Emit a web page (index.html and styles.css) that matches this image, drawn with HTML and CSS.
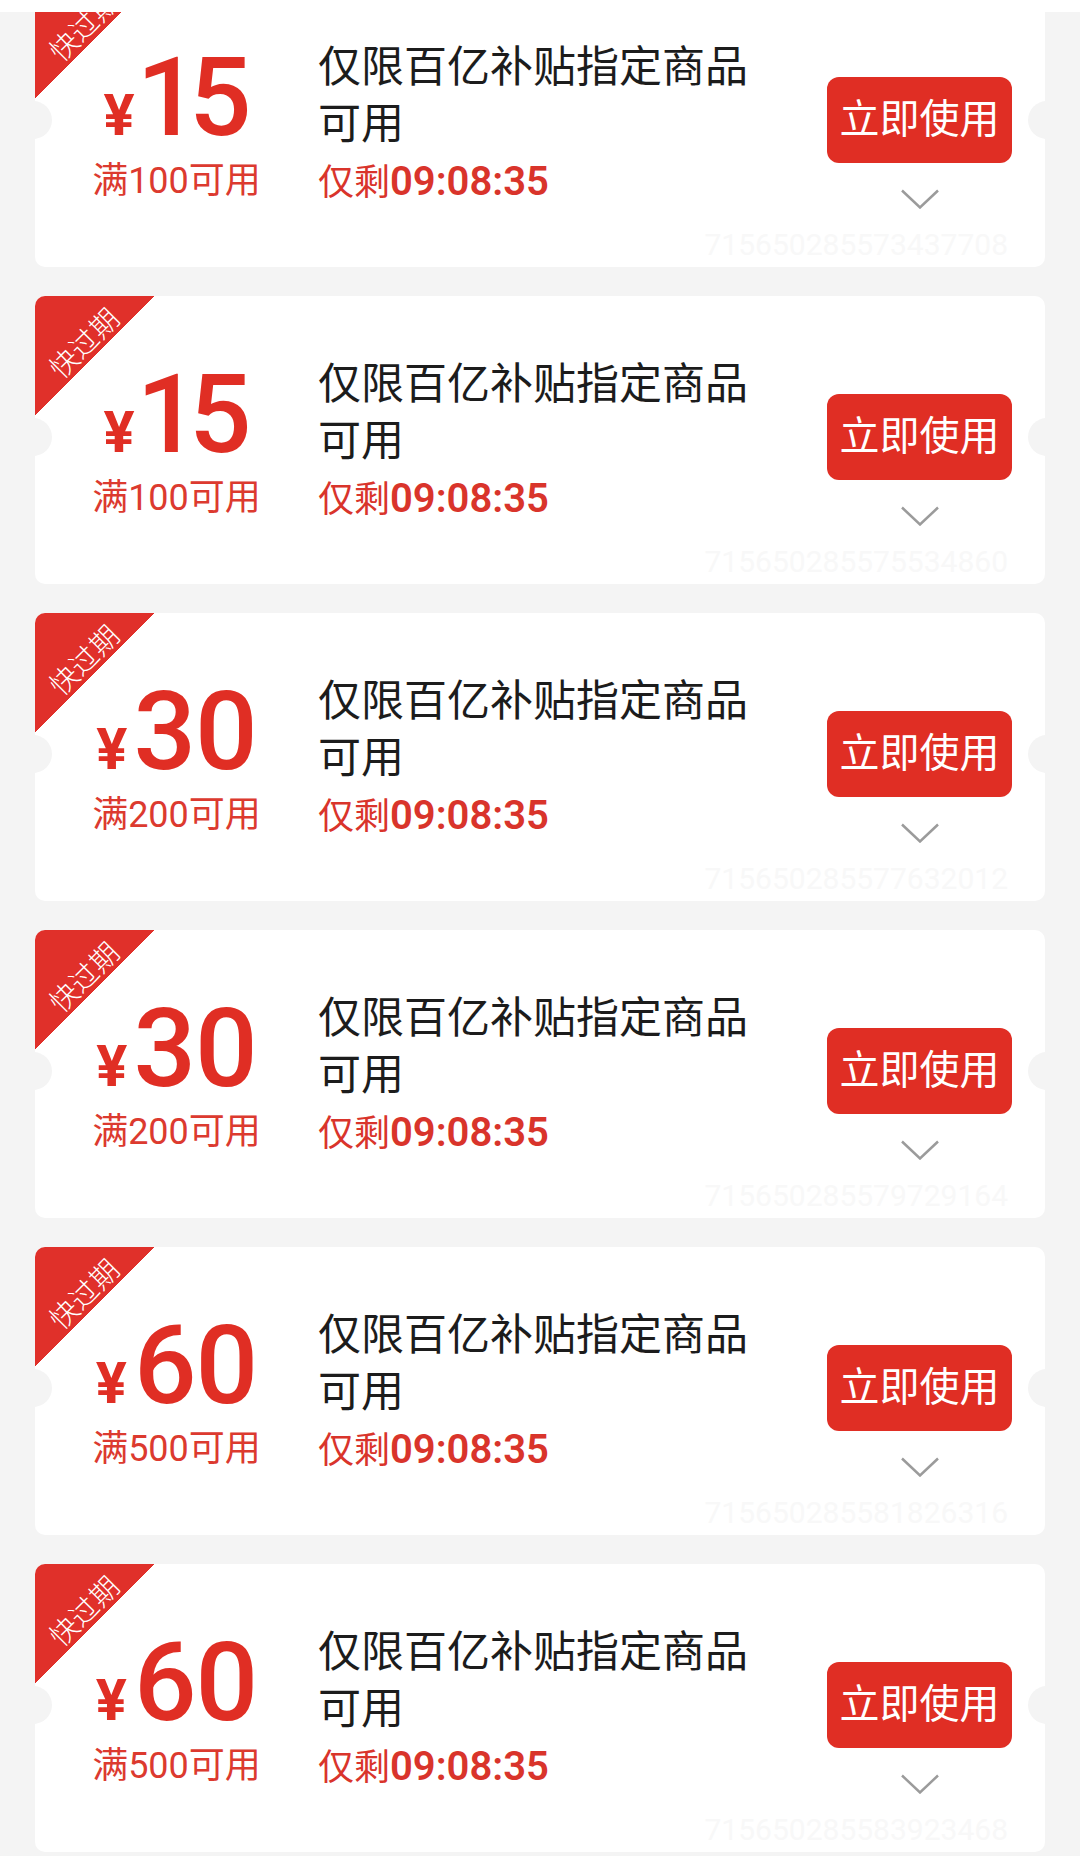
FILE: index.html
```html
<!DOCTYPE html>
<html lang="zh-CN">
<head>
<meta charset="utf-8">
<title>优惠券</title>
<link rel="stylesheet" href="styles.css">
</head>
<body>
<div class="topbar"></div>
<main class="list">
  <section class="coupon">
    <div class="tag"><span>快过期</span></div>
    <div class="row">
      <div class="amount">
        <div class="price"><span class="yen">¥</span>15</div>
        <div class="cond">满100可用</div>
      </div>
      <div class="info">
        <div class="title">仅限百亿补贴指定商品可用</div>
        <div class="timer">仅剩<b>09:08:35</b></div>
      </div>
      <div class="action">
        <button class="use">立即使用</button>
        <svg class="chev" width="38" height="20" viewBox="0 0 38 20"><polyline points="1,1.5 19,18.5 37,1.5"/></svg>
      </div>
    </div>
    <div class="code">715650285573437708</div>
    <i class="notch left"></i><i class="notch right"></i>
  </section>

  <section class="coupon">
    <div class="tag"><span>快过期</span></div>
    <div class="row">
      <div class="amount">
        <div class="price"><span class="yen">¥</span>15</div>
        <div class="cond">满100可用</div>
      </div>
      <div class="info">
        <div class="title">仅限百亿补贴指定商品可用</div>
        <div class="timer">仅剩<b>09:08:35</b></div>
      </div>
      <div class="action">
        <button class="use">立即使用</button>
        <svg class="chev" width="38" height="20" viewBox="0 0 38 20"><polyline points="1,1.5 19,18.5 37,1.5"/></svg>
      </div>
    </div>
    <div class="code">715650285575534860</div>
    <i class="notch left"></i><i class="notch right"></i>
  </section>

  <section class="coupon">
    <div class="tag"><span>快过期</span></div>
    <div class="row">
      <div class="amount">
        <div class="price"><span class="yen">¥</span>30</div>
        <div class="cond">满200可用</div>
      </div>
      <div class="info">
        <div class="title">仅限百亿补贴指定商品可用</div>
        <div class="timer">仅剩<b>09:08:35</b></div>
      </div>
      <div class="action">
        <button class="use">立即使用</button>
        <svg class="chev" width="38" height="20" viewBox="0 0 38 20"><polyline points="1,1.5 19,18.5 37,1.5"/></svg>
      </div>
    </div>
    <div class="code">715650285577632012</div>
    <i class="notch left"></i><i class="notch right"></i>
  </section>

  <section class="coupon">
    <div class="tag"><span>快过期</span></div>
    <div class="row">
      <div class="amount">
        <div class="price"><span class="yen">¥</span>30</div>
        <div class="cond">满200可用</div>
      </div>
      <div class="info">
        <div class="title">仅限百亿补贴指定商品可用</div>
        <div class="timer">仅剩<b>09:08:35</b></div>
      </div>
      <div class="action">
        <button class="use">立即使用</button>
        <svg class="chev" width="38" height="20" viewBox="0 0 38 20"><polyline points="1,1.5 19,18.5 37,1.5"/></svg>
      </div>
    </div>
    <div class="code">715650285579729164</div>
    <i class="notch left"></i><i class="notch right"></i>
  </section>

  <section class="coupon">
    <div class="tag"><span>快过期</span></div>
    <div class="row">
      <div class="amount">
        <div class="price"><span class="yen">¥</span>60</div>
        <div class="cond">满500可用</div>
      </div>
      <div class="info">
        <div class="title">仅限百亿补贴指定商品可用</div>
        <div class="timer">仅剩<b>09:08:35</b></div>
      </div>
      <div class="action">
        <button class="use">立即使用</button>
        <svg class="chev" width="38" height="20" viewBox="0 0 38 20"><polyline points="1,1.5 19,18.5 37,1.5"/></svg>
      </div>
    </div>
    <div class="code">715650285581826316</div>
    <i class="notch left"></i><i class="notch right"></i>
  </section>

  <section class="coupon">
    <div class="tag"><span>快过期</span></div>
    <div class="row">
      <div class="amount">
        <div class="price"><span class="yen">¥</span>60</div>
        <div class="cond">满500可用</div>
      </div>
      <div class="info">
        <div class="title">仅限百亿补贴指定商品可用</div>
        <div class="timer">仅剩<b>09:08:35</b></div>
      </div>
      <div class="action">
        <button class="use">立即使用</button>
        <svg class="chev" width="38" height="20" viewBox="0 0 38 20"><polyline points="1,1.5 19,18.5 37,1.5"/></svg>
      </div>
    </div>
    <div class="code">715650285583923468</div>
    <i class="notch left"></i><i class="notch right"></i>
  </section>
</main>
</body>
</html>
```

FILE: styles.css
```css
html, body {
  margin: 0;
  padding: 0;
}
body {
  background: #f4f4f4;
  font-family: Roboto, "Noto Sans CJK SC", sans-serif;
  height: 1856px;
  overflow: hidden;
}
.topbar {
  position: fixed;
  top: 0;
  left: 0;
  right: 0;
  height: 12px;
  background: #fff;
  z-index: 5;
}
.list {
  margin-top: -21px;
}
.coupon {
  position: relative;
  margin: 0 35px 29px;
  height: 288px;
  background: #fff;
  border-radius: 10px;
  overflow: hidden;
  display: flex;
  flex-direction: column;
}
.tag {
  position: absolute;
  top: 0;
  left: 0;
  width: 120px;
  height: 120px;
  background: linear-gradient(to bottom right, #e0302a 50%, transparent 50%);
}
.tag span {
  position: absolute;
  left: 48px;
  top: 46px;
  transform: translate(-50%, -50%) rotate(-45deg);
  color: #fff;
  font-size: 28px;
  font-weight: 300;
  line-height: 30px;
  white-space: nowrap;
  font-family: "Noto Sans CJK SC", sans-serif;
}
.row {
  display: flex;
  height: 251px;
}
.amount {
  width: 283px;
  padding-top: 64px;
  box-sizing: border-box;
  text-align: center;
  color: #e02e24;
}
.price {
  font-size: 110px;
  line-height: 110px;
  font-weight: 500;
  font-feature-settings: "pnum" 1;
  letter-spacing: -2px;
}
.yen {
  font-size: 58px;
  line-height: 0;
  font-weight: 700;
  margin-right: 6px;
  letter-spacing: 0;
}
.cond {
  margin-top: 6px;
  font-size: 36px;
  line-height: 44px;
  color: #dc3a2f;
}
.info {
  flex: 1;
  padding-top: 60px;
}
.title {
  width: 440px;
  font-size: 43px;
  line-height: 57px;
  color: #1c1c1c;
}
.timer {
  margin-top: 8px;
  font-size: 36px;
  line-height: 44px;
  color: #d9342b;
}
.timer b {
  font-size: 40px;
  line-height: 0;
  font-weight: 600;
}
.action {
  width: 185px;
  margin-right: 33px;
  padding-top: 98px;
  display: flex;
  flex-direction: column;
  align-items: center;
}
.use {
  width: 185px;
  height: 86px;
  padding: 0;
  border: none;
  border-radius: 12px;
  background: #e02e24;
  color: #fff;
  font-family: Roboto, "Noto Sans CJK SC", sans-serif;
  font-size: 40px;
  line-height: 86px;
}
.chev {
  display: block;
  margin-top: 26px;
}
.chev polyline {
  fill: none;
  stroke: #9b9b9b;
  stroke-width: 2.5;
}
.code {
  padding-right: 37px;
  text-align: right;
  font-size: 30px;
  line-height: 30px;
  color: #f8f8f8;
}
.notch {
  position: absolute;
  top: 122px;
  width: 38px;
  height: 38px;
  border-radius: 50%;
  background: #f4f4f4;
}
.notch.left {
  left: -21px;
}
.notch.right {
  right: -21px;
}
```
